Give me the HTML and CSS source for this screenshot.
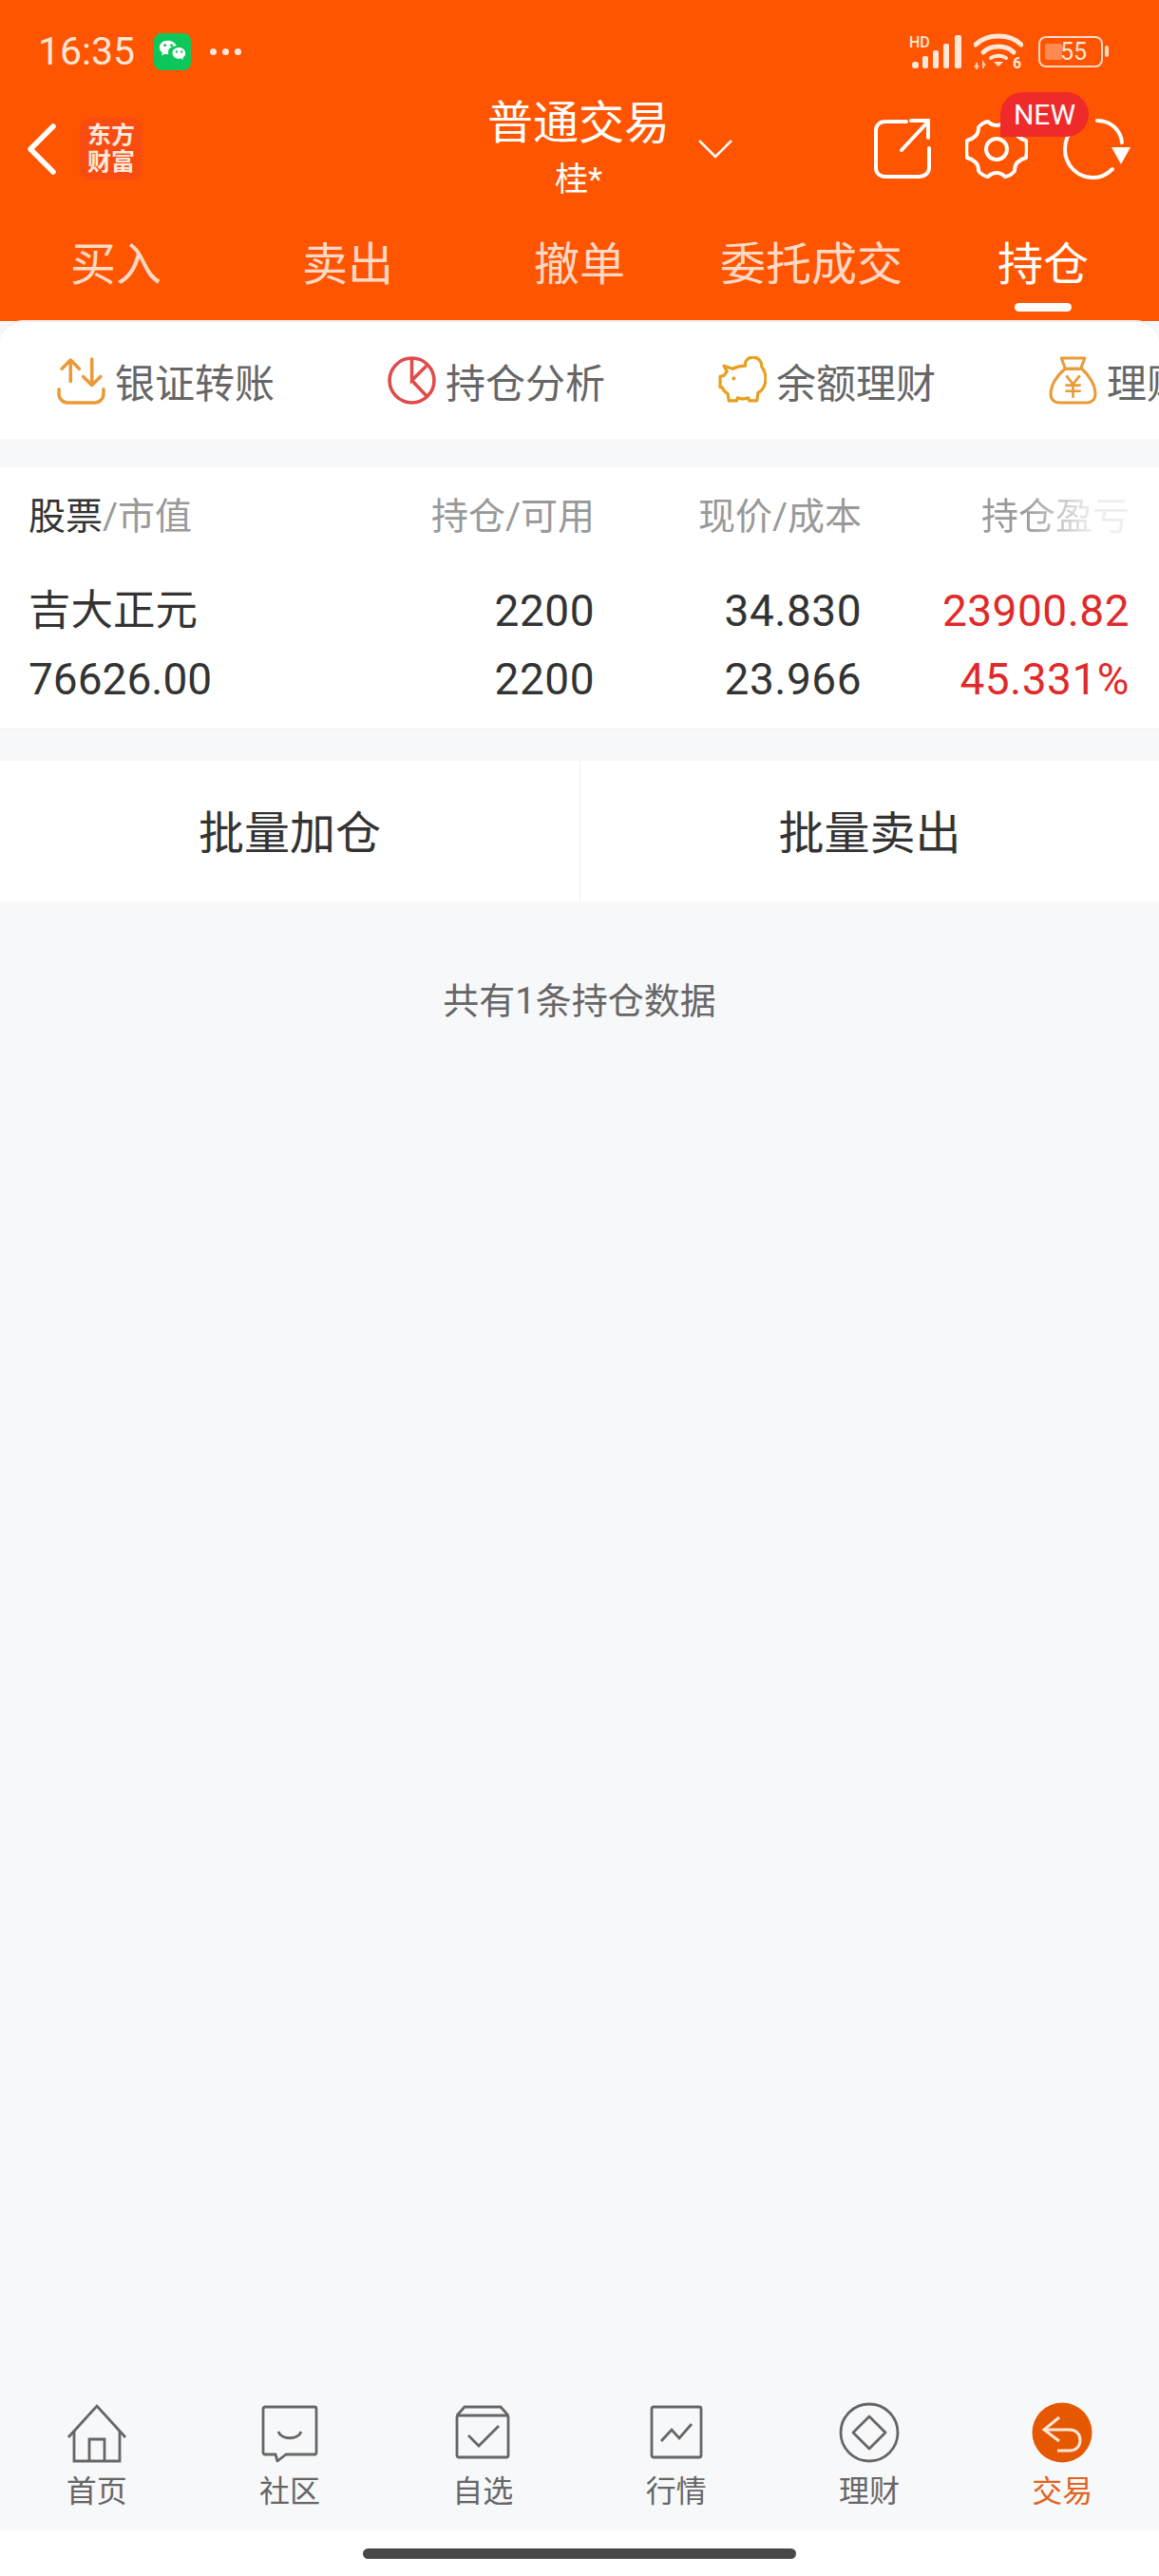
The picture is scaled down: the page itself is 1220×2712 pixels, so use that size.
FILE: index.html
```html
<!DOCTYPE html>
<html lang="zh-CN">
<head>
    <meta charset="UTF-8">
    <meta name="viewport" content="width=device-width, initial-scale=1.0">
    <title>普通交易 - 持仓</title>
    <link rel="stylesheet" href="styles.css">
</head>
<body>
    <div class="app">
        <header class="top">
            <!-- Status bar -->
            <div class="status">
                <div class="status-left">
                    <span class="time">16:35</span>
                    <svg class="wechat" viewBox="0 0 40 40">
                        <rect width="40" height="40" rx="8" fill="#0ec75a"/>
                        <path d="M15 8c-5.500 0-9 3.400-9 7.500 0 2.400 1.200 4.300 3.200 5.600l-.8 2.900 3.200-1.700c1 .3 2 .4 3.100.4 .4 0 .7 0 1-.1-.2-.7-.3-1.300-.3-2 0-4 3.700-7 8.300-7h.6C23.400 10.800 19.700 8 15 8z" fill="#fff"/>
                        <path d="M34 21.500c0-3.500-3.300-6-7-6-4 0-7 2.600-7 6s3 6 7 6c.8 0 1.600-.1 2.300-.3l2.500 1.400-.6-2.300c1.700-1.100 2.800-2.800 2.800-4.800z" fill="#fff"/>
                        <circle cx="12" cy="13" r="1.500" fill="#0ec75a"/>
                        <circle cx="19" cy="13" r="1.500" fill="#0ec75a"/>
                        <circle cx="24.500" cy="20" r="1.200" fill="#0ec75a"/>
                        <circle cx="30" cy="20" r="1.200" fill="#0ec75a"/>
                    </svg>
                    <span class="dots"><i></i><i></i><i></i></span>
                </div>
                <div class="status-right">
                    <svg class="signal" viewBox="0 0 56 36">
                        <text x="0" y="14" class="hd">HD</text>
                        <rect x="3" y="29" width="7" height="7" rx="3" fill="#ffe6d8"/>
                        <rect x="14" y="23" width="6" height="13" rx="2" fill="#ffe6d8"/>
                        <rect x="25" y="17" width="6" height="19" rx="2" fill="#ffe6d8"/>
                        <rect x="36" y="10" width="6" height="26" rx="2" fill="#ffe6d8"/>
                        <rect x="48" y="1" width="7" height="35" rx="2" fill="#ffe6d8"/>
                    </svg>
                    <svg class="wifi" viewBox="0 0 52 44">
                        <path d="M2 13C14 1 38 1 50 13" fill="none" stroke="#ffe6d8" stroke-width="5" stroke-linecap="round"/>
                        <path d="M10 21C18 13 34 13 42 21" fill="none" stroke="#ffe6d8" stroke-width="5" stroke-linecap="round"/>
                        <path d="M18 27c4-3 12-3 16 0" fill="none" stroke="#ffe6d8" stroke-width="4" stroke-linecap="round"/>
                        <path d="M21 31h10l-5 5z" fill="#ffe6d8"/>
                        <path d="M3 32v6M1 35l2 3 2-3M10 38v-6l2 3" fill="none" stroke="#ffc9ad" stroke-width="2"/>
                        <text x="41" y="38" class="six">6</text>
                    </svg>
                    <div class="battery">
                        <span class="battery-body"><i class="battery-fill"></i><b>55</b></span>
                        <span class="battery-tip"></span>
                    </div>
                </div>
            </div>

            <!-- Title row -->
            <div class="title-row">
                <div class="title-left">
                    <svg class="back" viewBox="0 0 32 54">
                        <path d="M28 3L4 27l24 24" fill="none" stroke="#fff" stroke-width="5.500" stroke-linecap="round" stroke-linejoin="round"/>
                    </svg>
                    <div class="logo">东方<br>财富</div>
                </div>
                <div class="title-mid">
                    <div class="title-main">普通交易</div>
                    <div class="title-sub">桂*</div>
                </div>
                <div class="title-right">
                    <svg class="caret" viewBox="0 0 36 20">
                        <path d="M1 1l17 17L35 1" fill="none" stroke="#fff" stroke-width="2.500"/>
                    </svg>
                    <div class="actions">
                        <svg class="act-share" viewBox="0 0 60 64">
                            <path d="M34 3H12C6 3 2 7 2 12v40c0 5 4 9 10 9h36c5 0 10-4 10-9V31" fill="none" stroke="#fff" stroke-width="4" stroke-linecap="round"/>
                            <path d="M29 33L57 3M39 2h18v18" fill="none" stroke="#fff" stroke-width="4" stroke-linecap="round"/>
                        </svg>
                        <div class="gear-wrap">
                            <svg class="act-gear" viewBox="0 0 66 66">
                                <path d="M24 4c3 3 6 4 9 4s6-1 9-4c3 0 8 3 10 6 0 4 1 7 3 9s5 4 9 5c1 3 1 15 0 18-4 1-7 3-9 5s-3 5-3 9c-2 3-7 6-10 6-3-3-6-4-9-4s-6 1-9 4c-3 0-8-3-10-6 0-4-1-7-3-9s-5-4-9-5c-1-3-1-15 0-18 4-1 7-3 9-5s3-5 3-9c2-3 7-6 10-6z" fill="none" stroke="#fff" stroke-width="4" stroke-linejoin="round"/>
                                <circle cx="33" cy="33" r="11" fill="none" stroke="#fff" stroke-width="4"/>
                            </svg>
                            <span class="new-badge">NEW</span>
                        </div>
                        <svg class="act-refresh" viewBox="0 0 72 66">
                            <path d="M37 3C52 3 62 14 63 26M53 54C47 60 41 63 33 63 16 63 3 50 3 33 3 24 6 17 12 11" fill="none" stroke="#fff" stroke-width="4" stroke-linecap="round"/>
                            <path d="M52 31h20L62 49z" fill="#fff"/>
                        </svg>
                    </div>
                </div>
            </div>

            <!-- Trade tabs -->
            <nav class="tabs">
                <a class="tab">买入</a>
                <a class="tab">卖出</a>
                <a class="tab">撤单</a>
                <a class="tab">委托成交</a>
                <a class="tab tab-on">持仓</a>
            </nav>
        </header>

        <main class="content">
            <!-- Shortcut strip -->
            <div class="tools">
                <div class="tool">
                    <svg class="tool-icon" viewBox="0 0 50 50">
                        <path d="M14 26V4M5 13l9-9 9 9" fill="none" stroke="#e89b38" stroke-width="3.500" stroke-linecap="round" stroke-linejoin="round"/>
                        <path d="M36 3v26M27 21l9 9 9-9" fill="none" stroke="#e89b38" stroke-width="3.500" stroke-linecap="round" stroke-linejoin="round"/>
                        <path d="M2 34v5c0 5 4 9 9 9h28c5 0 9-4 9-9v-5" fill="none" stroke="#e89b38" stroke-width="3.500" stroke-linecap="round"/>
                    </svg>
                    <span>银证转账</span>
                </div>
                <div class="tool">
                    <svg class="tool-icon" viewBox="0 0 50 50">
                        <circle cx="25" cy="25" r="23" fill="none" stroke="#e24a4a" stroke-width="3.500"/>
                        <path d="M25 2v23l15-15M25 25l16 17" fill="none" stroke="#e24a4a" stroke-width="3.500"/>
                    </svg>
                    <span>持仓分析</span>
                </div>
                <div class="tool">
                    <svg class="tool-icon" viewBox="0 0 50 50">
                        <path d="M6 10l9 3c4-2 8-3 13-3-1-5 3-9 8-9 6 0 9 5 9 10 3 4 4 8 4 12 0 7-3 12-8 15l-1 8h-8l-1-3c-3 1-8 1-11 0l-1 3h-8l-1-7c-3-2-5-4-6-7H2V21l4-1c1-2 2-3 3-4z" fill="none" stroke="#e8a020" stroke-width="3.200" stroke-linejoin="round"/>
                        <circle cx="16" cy="23" r="2" fill="#e8a020"/>
                    </svg>
                    <span>余额理财</span>
                </div>
                <div class="tool">
                    <svg class="tool-icon" viewBox="0 0 50 50">
                        <path d="M13 2h24l-4 11H17z" fill="none" stroke="#e89b38" stroke-width="3" stroke-linejoin="round"/>
                        <path d="M17 13C8 20 2 30 2 39c0 6 4 9 9 9h28c5 0 9-3 9-9 0-9-6-19-14-26z" fill="none" stroke="#e89b38" stroke-width="3" stroke-linejoin="round"/>
                        <path d="M18 20l7 9 7-9M17 30h16M17 36h16M25 29v14" fill="none" stroke="#e89b38" stroke-width="2.600"/>
                    </svg>
                    <span>理财</span>
                </div>
            </div>

            <!-- Position table -->
            <section class="table">
                <div class="row row-head">
                    <div class="cell-left"><span class="dark">股票</span>/市值</div>
                    <div>持仓/可用</div>
                    <div>现价/成本</div>
                    <div class="fade">持仓盈亏</div>
                </div>
                <div class="row row-data">
                    <div class="cell-left stock-name">吉大正元</div>
                    <div>2200</div>
                    <div>34.830</div>
                    <div class="up">23900.82</div>
                </div>
                <div class="row row-data">
                    <div class="cell-left">76626.00</div>
                    <div>2200</div>
                    <div>23.966</div>
                    <div class="up">45.331%</div>
                </div>
            </section>

            <div class="batch">
                <button class="batch-btn">批量加仓</button>
                <button class="batch-btn">批量卖出</button>
            </div>

            <p class="summary">共有1条持仓数据</p>
        </main>

        <!-- Bottom navigation -->
        <footer class="nav">
            <div class="nav-item">
                <svg class="nav-icon" viewBox="0 0 64 64">
                    <path d="M2 37L32 4l30 33" fill="none" stroke="#666" stroke-width="2.800"/>
                    <path d="M8 30v32h48V30M24 62V39h16v23" fill="none" stroke="#666" stroke-width="2.800"/>
                </svg>
                <span>首页</span>
            </div>
            <div class="nav-item">
                <svg class="nav-icon" viewBox="0 0 64 64">
                    <path d="M6 5h52a2 2 0 0 1 2 2v46a2 2 0 0 1-2 2H28l-9 7-2-7H6a2 2 0 0 1-2-2V7a2 2 0 0 1 2-2z" fill="none" stroke="#666" stroke-width="2.800" stroke-linejoin="round"/>
                    <path d="M20 31c3 9 21 9 24 0" fill="none" stroke="#666" stroke-width="2.800"/>
                </svg>
                <span>社区</span>
            </div>
            <div class="nav-item">
                <svg class="nav-icon" viewBox="0 0 64 64">
                    <rect x="5" y="14" width="54" height="44" rx="2" fill="none" stroke="#666" stroke-width="2.800"/>
                    <path d="M5 14l8-9h38l8 9" fill="none" stroke="#666" stroke-width="2.800"/>
                    <path d="M17 35l11 11 21-21" fill="none" stroke="#666" stroke-width="2.800"/>
                </svg>
                <span>自选</span>
            </div>
            <div class="nav-item">
                <svg class="nav-icon" viewBox="0 0 64 64">
                    <rect x="6" y="5" width="52" height="53" rx="2" fill="none" stroke="#666" stroke-width="2.800"/>
                    <path d="M16 41l11-12 8 9 13-15" fill="none" stroke="#666" stroke-width="2.800"/>
                </svg>
                <span>行情</span>
            </div>
            <div class="nav-item">
                <svg class="nav-icon" viewBox="0 0 64 64">
                    <circle cx="32" cy="32" r="30" fill="none" stroke="#666" stroke-width="2.800"/>
                    <path d="M32 15l17 17-17 17-17-17z" fill="none" stroke="#666" stroke-width="2.800" stroke-linejoin="round"/>
                </svg>
                <span>理财</span>
            </div>
            <div class="nav-item nav-on">
                <svg class="nav-icon" viewBox="0 0 64 64">
                    <circle cx="32" cy="32" r="31.500" fill="#e65800"/>
                    <path d="M29 16L13 29l16 12" fill="none" stroke="#ffe6d8" stroke-width="3"/>
                    <path d="M14 29h26c7 0 11 5 11 11s-4 11-11 11H27" fill="none" stroke="#ffe6d8" stroke-width="3"/>
                </svg>
                <span>交易</span>
            </div>
        </footer>

        <div class="home-bar"><span></span></div>
    </div>
</body>
</html>
```

FILE: styles.css
```css
* {
    box-sizing: border-box;
}
body {
    margin: 0;
    padding: 0;
    background-color: #fff;
    color: #333;
    font-family: Roboto, "Noto Sans CJK SC", sans-serif;
}
.app {
    display: flex;
    flex-direction: column;
    height: 2712px;
    overflow: hidden;
}

/* Orange header */
.top {
    background-color: #ff5500;
    color: #fff;
}
.status {
    display: flex;
    justify-content: space-between;
    align-items: center;
    height: 108px;
    padding: 0 53px 0 40px;
}
.status-left, .status-right {
    display: flex;
    align-items: center;
}
.time {
    font-size: 41px;
    color: #ffe6d8;
    width: 122px;
}
.wechat {
    width: 39px;
    height: 39px;
}
.dots {
    display: flex;
    gap: 6px;
    margin-left: 20px;
}
.dots i {
    width: 7px;
    height: 7px;
    border-radius: 50%;
    background-color: #ffe6d8;
}
.signal {
    width: 56px;
    height: 36px;
}
.hd {
    font-size: 16px;
    font-weight: 500;
    fill: #ffe6d8;
}
.wifi {
    width: 52px;
    height: 44px;
    margin-left: 12px;
    margin-top: 4px;
}
.six {
    font-size: 16px;
    font-weight: 700;
    fill: #ffe6d8;
}
.battery {
    display: flex;
    align-items: center;
    margin-left: 16px;
}
.battery-body {
    position: relative;
    display: flex;
    align-items: center;
    justify-content: center;
    width: 68px;
    height: 33px;
    border: 2.500px solid #ffd9c6;
    border-radius: 8px;
}
.battery-fill {
    position: absolute;
    left: 5px;
    top: 6px;
    bottom: 6px;
    width: 18px;
    border-radius: 2px;
    background-color: #ff8a50;
}
.battery-body b {
    position: relative;
    margin-left: 6px;
    font-size: 25px;
    font-weight: 400;
    color: #ffe6d8;
}
.battery-tip {
    width: 4px;
    height: 12px;
    margin-left: 2px;
    border-radius: 2px;
    background-color: #ffd9c6;
}

.title-row {
    display: grid;
    grid-template-columns: 1fr auto 1fr;
    height: 107px;
    padding: 0 30px 0 28px;
}
.title-left {
    display: flex;
    align-items: center;
    padding-bottom: 10px;
}
.back {
    width: 32px;
    height: 54px;
}
.logo {
    width: 66px;
    height: 66px;
    margin-left: 24px;
    border-radius: 12px;
    background-color: #f84c10;
    font-size: 25px;
    line-height: 28px;
    font-weight: 700;
    text-align: center;
    padding-top: 5px;
    color: #ffe9dd;
}
.title-mid {
    margin-top: -9px;
    text-align: center;
}
.title-main {
    font-size: 48px;
    line-height: 62px;
}
.title-sub {
    margin-top: 4px;
    font-size: 35px;
    line-height: 50px;
}
.title-right {
    display: flex;
    align-items: center;
    justify-content: space-between;
    padding-left: 30px;
    padding-bottom: 10px;
}
.caret {
    width: 36px;
    height: 20px;
}
.actions {
    display: flex;
    align-items: center;
    gap: 36px;
}
.act-share {
    width: 60px;
    height: 64px;
}
.act-gear {
    display: block;
    width: 66px;
    height: 66px;
}
.act-refresh {
    width: 72px;
    height: 66px;
}
.gear-wrap {
    position: relative;
}
.new-badge {
    position: absolute;
    left: 37px;
    top: -27px;
    width: 93px;
    height: 47px;
    border-radius: 24px 24px 24px 0;
    background-color: #ee2a2a;
    color: #fff;
    font-size: 30px;
    line-height: 47px;
    text-align: center;
}

.tabs {
    display: grid;
    grid-template-columns: repeat(5, 1fr);
    height: 123px;
}
.tab {
    position: relative;
    text-align: center;
    font-size: 48px;
    line-height: 62px;
    padding-top: 33px;
    color: #ffd9c6;
}
.tab-on {
    color: #fff;
}
.tab-on::after {
    content: "";
    position: absolute;
    left: 92px;
    bottom: 10px;
    width: 60px;
    height: 9px;
    border-radius: 5px;
    background-color: #fff;
}

/* Page body */
.content {
    flex: 1;
    min-height: 0;
    background-color: #f7f8fa;
}
.tools {
    display: flex;
    height: 125px;
    padding-left: 60px;
    margin-top: -1px;
    overflow: hidden;
    border-top: 2px solid #eee;
    border-radius: 24px 24px 0 0;
    background-color: #fff;
}
.tool {
    display: flex;
    flex: 0 0 348px;
    align-items: center;
    gap: 10px;
    font-size: 42px;
    color: #666;
}
.tool span {
    white-space: nowrap;
}
.tool-icon {
    flex: none;
    width: 51px;
    height: 51px;
}

.table {
    margin-top: 30px;
    padding: 0 31px 16px 30px;
    background-color: #fff;
    border-bottom: 1px solid #eeeff1;
}
.row {
    display: grid;
    grid-template-columns: 1fr 280px 281px 282px;
    text-align: right;
}
.cell-left {
    text-align: left;
}
.row-head {
    height: 115px;
    align-items: center;
    font-size: 39px;
    color: #999;
    padding-bottom: 19px;
}
.dark {
    color: #333;
}
.fade {
    background: linear-gradient(90deg, #999 60%, #eee 86%);
    -webkit-background-clip: text;
    background-clip: text;
    color: transparent;
}
.row-data {
    height: 72px;
    font-size: 46px;
    line-height: 72px;
    letter-spacing: 0.5px;
}
.row-data .cell-left {
    letter-spacing: 0;
}
.row-data .stock-name {
    font-size: 44.500px;
}
.up {
    color: #e02a2a;
}

.batch {
    display: grid;
    grid-template-columns: 1fr 1fr;
    margin-top: 33px;
    background-color: #fff;
}
.batch-btn {
    height: 148px;
    padding: 0 0 4px;
    border: none;
    background: none;
    font-family: inherit;
    font-size: 48px;
    color: #333;
}
.batch-btn + .batch-btn {
    border-left: 1px solid #eeeff1;
}
.summary {
    margin: 75px 0 0;
    text-align: center;
    font-size: 38px;
    line-height: 60px;
    color: #666;
}

/* Bottom navigation */
.nav {
    display: grid;
    grid-template-columns: repeat(6, 1fr);
    height: 154px;
    padding-top: 19px;
    background-color: #f7f8fa;
}
.nav-item {
    display: flex;
    flex-direction: column;
    align-items: center;
    font-size: 32px;
    line-height: 44px;
    color: #666;
}
.nav-icon {
    width: 64px;
    height: 64px;
    margin-bottom: 8px;
}
.nav-on {
    color: #e0631f;
}
.home-bar {
    display: flex;
    justify-content: center;
    height: 48px;
    padding-top: 19px;
    background-color: #fff;
}
.home-bar span {
    width: 456px;
    height: 11px;
    border-radius: 6px;
    background-color: #484848;
}
```
